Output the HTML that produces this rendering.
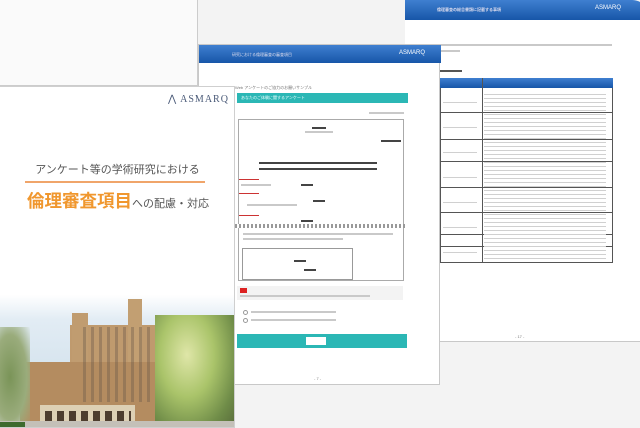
<!DOCTYPE html>
<html><head><meta charset="utf-8"><style>
*{margin:0;padding:0;box-sizing:border-box}
body{width:640px;height:428px;overflow:hidden;background:#f3f3f3;position:relative;font-family:"Liberation Sans","Noto Sans CJK JP",sans-serif}
.a{position:absolute}
.t{position:absolute;font-size:4px;color:#777;white-space:nowrap;line-height:5px}
.ln{position:absolute;height:2px;background:#c9c9c9}
.dk{position:absolute;height:2px;background:#444}
.hdr{background:linear-gradient(#3f7fd0,#1756a8);}
.row{position:absolute;left:0;width:171px;border-bottom:1px solid #555}
</style></head><body>
<div class="a" style="left:0;top:0;width:198px;height:86px;background:#fafafa;border-right:1px solid #ccc;border-bottom:1px solid #ccc"></div>

<div class="a" style="left:405px;top:0;width:245px;height:342px;background:#fff;border-bottom:1px solid #c8c8c8;border-top-right-radius:18px;overflow:hidden">
  <div class="a hdr" style="left:0;top:0;width:245px;height:20px"></div>
  <div class="t" style="left:32px;top:7px;color:#dde;font-weight:bold">倫理審査の総合書類に記載する事項</div>
  <div class="t" style="left:190px;top:6px;color:#fff;font-size:6px">ASMARQ</div>
  <div class="ln" style="left:35px;top:44px;width:172px"></div>
  <div class="ln" style="left:35px;top:50px;width:20px"></div>
  <div class="dk" style="left:35px;top:70px;width:22px;background:#555"></div>
  <div class="a" style="left:35px;top:78px;width:173px;height:185px;border:1px solid #555;border-top:none">
    <div class="a hdr" style="left:-1px;top:0;width:173px;height:10px"></div>
    <div class="row" style="top:10px;height:25px"></div>
    <div class="row" style="top:35px;height:27px"></div>
    <div class="row" style="top:62px;height:22px"></div>
    <div class="row" style="top:84px;height:26px"></div>
    <div class="row" style="top:110px;height:25px"></div>
    <div class="row" style="top:135px;height:22px"></div>
    <div class="row" style="top:157px;height:12px"></div>
    <div class="a" style="left:41px;top:0;width:1px;height:185px;background:#555"></div>
  </div>
  <div class="t" style="left:110px;top:334px">- 17 -</div>
</div>
<div class="a" style="left:484px;top:92px;width:122px;height:168px;background:repeating-linear-gradient(transparent 0 2px,#d0d0d0 2px 3px,transparent 3px 4px)"></div>
<div class="a" style="left:443px;top:94px;width:34px;height:166px;background:repeating-linear-gradient(transparent 0 8px,#d0d0d0 8px 9px,transparent 9px 25px)"></div>

<div class="a" style="left:198px;top:44px;width:242px;height:341px;background:#fff;border:1px solid #c8c8c8">
  <div class="a hdr" style="left:0;top:0;width:242px;height:18px"></div>
  <div class="t" style="left:33px;top:7px;color:#dde">研究における倫理審査の審査項目</div>
  <div class="t" style="left:200px;top:6px;color:#fff;font-size:6px">ASMARQ</div>
  <div class="t" style="left:36px;top:40px">Web アンケートのご協力のお願いサンプル</div>
  <div class="a" style="left:38px;top:48px;width:171px;height:10px;background:#2bb7b5"></div>
  <div class="t" style="left:42px;top:50px;color:#eff">あなたのご体験に関するアンケート</div>
  <div class="ln" style="left:170px;top:67px;width:35px"></div>
  <div class="a" style="left:39px;top:74px;width:166px;height:162px;border:1px solid #aaa;background:#fff"></div>
  <div class="dk" style="left:113px;top:82px;width:14px"></div>
  <div class="ln" style="left:106px;top:86px;width:28px"></div>
  <div class="dk" style="left:182px;top:95px;width:20px"></div>
  <div class="dk" style="left:60px;top:117px;width:118px"></div>
  <div class="dk" style="left:60px;top:123px;width:118px"></div>
  <div class="a" style="left:40px;top:134px;width:20px;height:1px;background:#c33"></div>
  <div class="ln" style="left:42px;top:139px;width:30px"></div>
  <div class="dk" style="left:102px;top:139px;width:12px"></div>
  <div class="a" style="left:40px;top:148px;width:20px;height:1px;background:#c33"></div>
  <div class="dk" style="left:114px;top:155px;width:12px"></div>
  <div class="ln" style="left:48px;top:159px;width:50px"></div>
  <div class="a" style="left:40px;top:170px;width:20px;height:1px;background:#c33"></div>
  <div class="dk" style="left:102px;top:175px;width:12px"></div>
  <div class="a" style="left:36px;top:179px;width:172px;height:4px;background:repeating-linear-gradient(90deg,#999 0 2px,#fff 2px 4px)"></div>
  <div class="ln" style="left:44px;top:188px;width:150px"></div>
  <div class="ln" style="left:44px;top:193px;width:100px"></div>
  <div class="a" style="left:43px;top:203px;width:111px;height:32px;border:1px solid #999"></div>
  <div class="dk" style="left:95px;top:215px;width:12px"></div>
  <div class="dk" style="left:105px;top:224px;width:12px"></div>
  <div class="a" style="left:38px;top:241px;width:166px;height:14px;background:#f3f3f3"></div>
  <div class="a" style="left:41px;top:243px;width:7px;height:5px;background:#d22"></div>
  <div class="ln" style="left:41px;top:250px;width:130px"></div>
  <div class="a" style="left:44px;top:265px;width:5px;height:5px;border:1px solid #999;border-radius:50%"></div>
  <div class="ln" style="left:52px;top:266px;width:85px"></div>
  <div class="a" style="left:44px;top:273px;width:5px;height:5px;border:1px solid #999;border-radius:50%"></div>
  <div class="ln" style="left:52px;top:274px;width:85px"></div>
  <div class="a" style="left:38px;top:289px;width:170px;height:14px;background:#2bb7b5"></div>
  <div class="a" style="left:107px;top:292px;width:20px;height:8px;background:#fff"></div>
  <div class="t" style="left:115px;top:331px">- 7 -</div>
</div>

<div class="a" style="left:0;top:86px;width:235px;height:342px;background:#fff;border:1px solid #cfcfcf;border-left:none;overflow:hidden">
  <div class="a" style="left:168px;top:7px;font-family:'Liberation Serif',serif;font-size:10px;color:#4a5a78;letter-spacing:1px">⋀ ASMARQ</div>
  <div class="a" style="left:0;top:74px;width:235px;text-align:center;font-size:11px;color:#555">アンケート等の学術研究における</div>
  <div class="a" style="left:25px;top:94px;width:180px;height:1.5px;background:#f0a56a"></div>
  <div class="a" style="left:27px;top:101px;font-size:17.5px;color:#f0972e;font-weight:bold;white-space:nowrap">倫理審査項目<span style="font-size:11px;color:#555;font-weight:normal">への配慮・対応</span></div>
  <div class="a" style="left:0;top:196px;width:235px;height:146px;background:linear-gradient(#fff 0,#fff 8%,#e2ecf4 25%,#d6e4ee 60%,#ddd 100%)"></div>
  <div class="a" style="left:70px;top:238px;width:95px;height:100px;background:#bf9a6e"></div>
  <div class="a" style="left:128px;top:212px;width:14px;height:126px;background:#c29f72"></div>
  <div class="a" style="left:72px;top:226px;width:16px;height:112px;background:#c09c70"></div>
  <div class="a" style="left:20px;top:275px;width:150px;height:63px;background:#b48c60"></div>
  <div class="a" style="left:78px;top:240px;width:80px;height:75px;background:repeating-linear-gradient(90deg,transparent 0 5px,#6c5a4a 5px 8px);opacity:.4"></div>
  <div class="a" style="left:40px;top:318px;width:95px;height:20px;background:#ddd0b4"></div>
  <div class="a" style="left:45px;top:324px;width:86px;height:14px;background:repeating-linear-gradient(90deg,#4d3d2e 0 7px,transparent 7px 12px)"></div>
  <div class="a" style="left:155px;top:228px;width:80px;height:114px;background:radial-gradient(ellipse at 40% 35%,#dfe6a8 0,#aac46a 40%,#6f8c48 75%,#56693a 100%)"></div>
  <div class="a" style="left:-10px;top:240px;width:40px;height:100px;background:radial-gradient(ellipse,#7a9458 0,#9aac7c 60%,transparent 100%)"></div>
  <div class="a" style="left:0;top:334px;width:235px;height:8px;background:#c4c0b8"></div>
  <div class="a" style="left:0;top:335px;width:25px;height:7px;background:#3e6a2e"></div>
</div>
</body></html>
